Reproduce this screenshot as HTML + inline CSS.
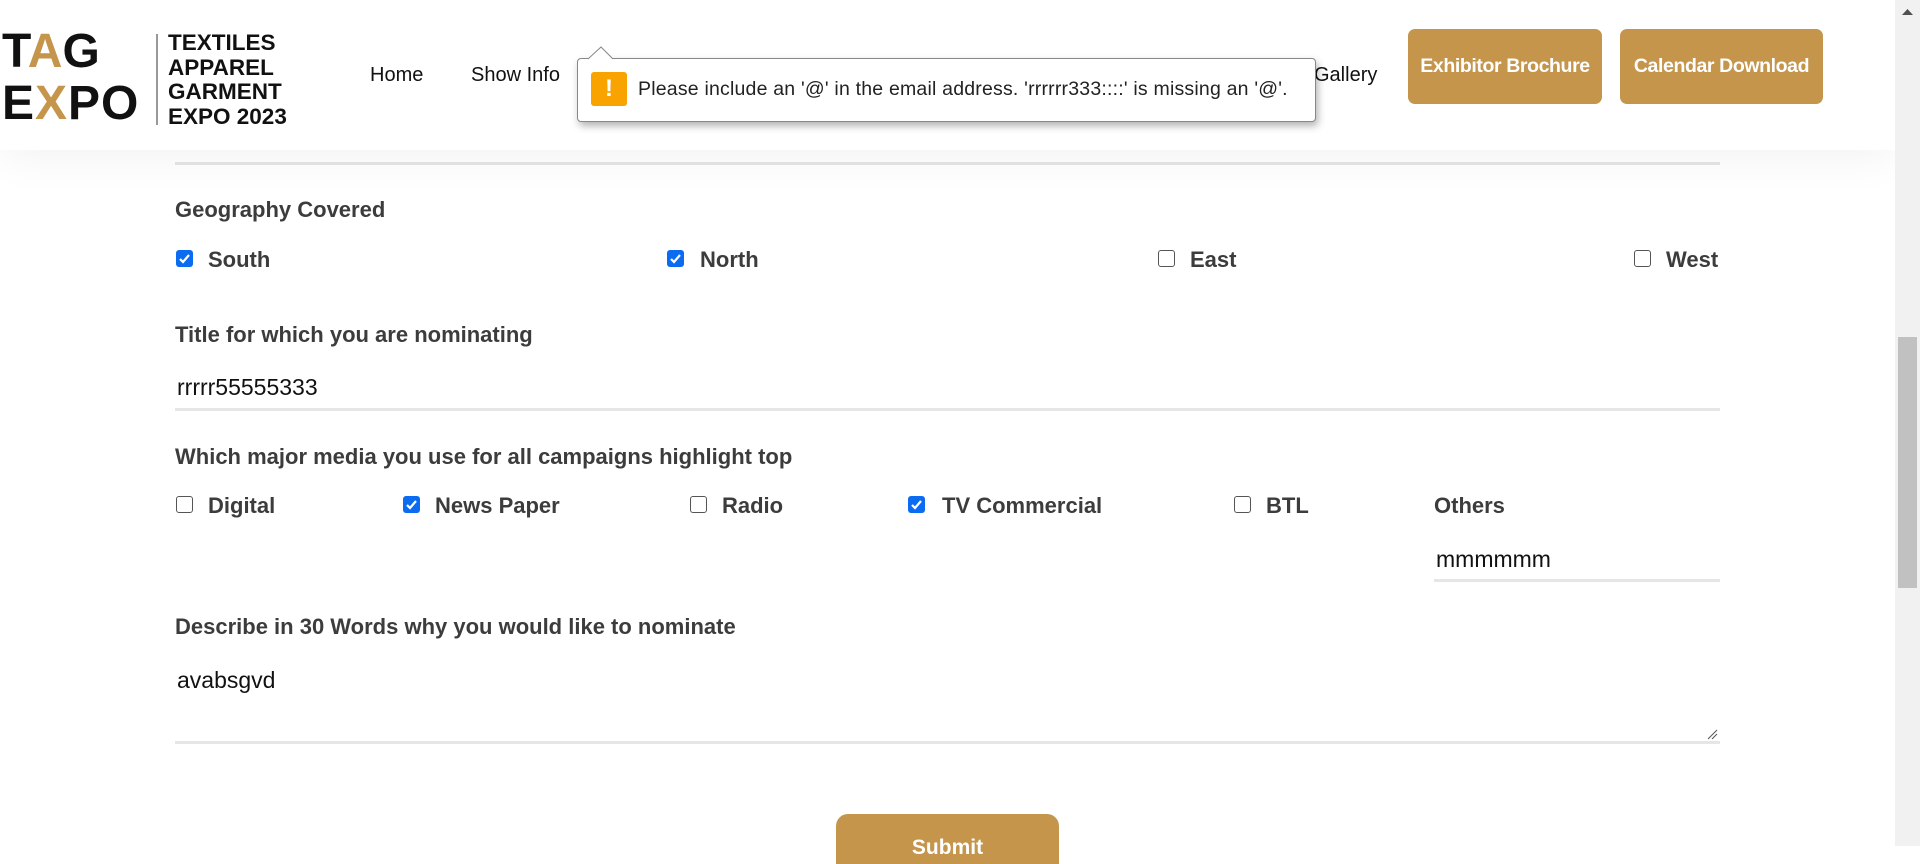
<!DOCTYPE html>
<html><head><meta charset="utf-8"><style>
*{margin:0;padding:0;box-sizing:border-box}
body{width:1920px;height:846px;overflow:hidden;background:#fff;font-family:"Liberation Sans",Arial,sans-serif;position:relative}
.abs{position:absolute}
.hdr{position:absolute;left:0;top:0;width:1895px;height:150px;background:#fff;box-shadow:0 8px 40px rgba(0,0,0,0.05);z-index:2}
.sb{position:absolute;left:1895px;top:0;width:25px;height:846px;background:#f1f1f1;z-index:3}
.thumb{position:absolute;left:3px;top:337px;width:19px;height:251px;background:#c1c1c1}
.nav{position:absolute;font-size:20px;color:#111;top:64px}
.btn{position:absolute;top:29px;height:75px;background:#c4954b;border-radius:7px;color:#fff;font-weight:bold;font-size:19.5px;display:flex;align-items:center;justify-content:center;letter-spacing:-0.4px}
.lbl{position:absolute;font-weight:bold;font-size:22px;color:#3c3c3c;left:175px}
.cb{position:absolute;width:17px;height:17px;border-radius:3px}
.cb.on{background:#0b6cf2}
.cb.off{border:1.5px solid #555;background:#fff}
.opt{position:absolute;font-weight:bold;font-size:22px;color:#3c3c3c}
.line{position:absolute;height:3px;background:#e6e6e6}
.val{position:absolute;font-size:23px;color:#111}
</style></head><body>
<div class="hdr">
 <div class="abs" style="left:2px;top:28px;font-size:48px;font-weight:bold;color:#111;letter-spacing:0px;line-height:48px">T<span style="color:#c4954b">A</span>G</div>
 <div class="abs" style="left:2px;top:80px;font-size:48px;font-weight:bold;color:#111;letter-spacing:1px;line-height:48px">E<span style="color:#c4954b">X</span>PO</div>
 <div class="abs" style="left:156px;top:34px;width:2px;height:91px;background:#999"></div>
 <div class="abs" style="left:168px;top:31px;font-size:22.5px;font-weight:bold;color:#111;line-height:24.5px">TEXTILES<br>APPAREL<br>GARMENT<br>EXPO 2023</div>
 <div class="nav" style="left:370px">Home</div>
 <div class="nav" style="left:471px">Show Info</div>
 <div class="nav" style="left:1314px">Gallery</div>
 <div class="btn" style="left:1408px;width:194px">Exhibitor Brochure</div>
 <div class="btn" style="left:1620px;width:203px">Calendar Download</div>
</div>
<div class="abs" style="left:577px;top:58px;width:739px;height:64px;background:#fff;border:1px solid #888;border-radius:4px;box-shadow:2px 4px 8px rgba(0,0,0,0.3);z-index:5">
 <div class="abs" style="left:13px;top:13px;width:36px;height:34px;background:#f9a300;border-radius:3px;color:#fff;font-weight:bold;font-size:24px;text-align:center;line-height:34px">!</div>
 <div class="abs" style="left:60px;top:19px;font-size:19.5px;color:#222;white-space:nowrap;letter-spacing:0.2px">Please include an '@' in the email address. 'rrrrrr333::::' is missing an '@'.</div>
</div>
<svg class="abs" style="left:588px;top:46px;z-index:6" width="26" height="14"><path d="M0 13 L13 1 L25 13" fill="#fff" stroke="#888" stroke-width="1"/></svg>

<div class="line" style="left:175px;top:162px;width:1545px"></div>
<div class="lbl" style="top:197px">Geography Covered</div>
<div class="cb on" style="left:176px;top:250px"><svg width="17" height="17"><path d="M4 9 L7 12 L13 5" stroke="#fff" stroke-width="2.2" fill="none"/></svg></div>
<div class="opt" style="left:208px;top:247px">South</div>
<div class="cb on" style="left:667px;top:250px"><svg width="17" height="17"><path d="M4 9 L7 12 L13 5" stroke="#fff" stroke-width="2.2" fill="none"/></svg></div>
<div class="opt" style="left:700px;top:247px">North</div>
<div class="cb off" style="left:1158px;top:250px"></div>
<div class="opt" style="left:1190px;top:247px">East</div>
<div class="cb off" style="left:1634px;top:250px"></div>
<div class="opt" style="left:1666px;top:247px">West</div>

<div class="lbl" style="top:322px">Title for which you are nominating</div>
<div class="val" style="left:177px;top:374px">rrrrr55555333</div>
<div class="line" style="left:175px;top:408px;width:1545px"></div>

<div class="lbl" style="top:444px">Which major media you use for all campaigns highlight top</div>
<div class="cb off" style="left:176px;top:496px"></div>
<div class="opt" style="left:208px;top:493px">Digital</div>
<div class="cb on" style="left:403px;top:496px"><svg width="17" height="17"><path d="M4 9 L7 12 L13 5" stroke="#fff" stroke-width="2.2" fill="none"/></svg></div>
<div class="opt" style="left:435px;top:493px">News Paper</div>
<div class="cb off" style="left:690px;top:496px"></div>
<div class="opt" style="left:722px;top:493px">Radio</div>
<div class="cb on" style="left:908px;top:496px"><svg width="17" height="17"><path d="M4 9 L7 12 L13 5" stroke="#fff" stroke-width="2.2" fill="none"/></svg></div>
<div class="opt" style="left:942px;top:493px">TV Commercial</div>
<div class="cb off" style="left:1234px;top:496px"></div>
<div class="opt" style="left:1266px;top:493px">BTL</div>
<div class="opt" style="left:1434px;top:493px">Others</div>
<div class="val" style="left:1436px;top:546px">mmmmmm</div>
<div class="line" style="left:1434px;top:579px;width:286px"></div>

<div class="lbl" style="top:614px">Describe in 30 Words why you would like to nominate</div>
<div class="val" style="left:177px;top:667px">avabsgvd</div>
<svg class="abs" style="left:1706px;top:728px" width="12" height="12"><path d="M2 11 L11 2 M6 11 L11 6" stroke="#555" stroke-width="1"/></svg>
<div class="line" style="left:175px;top:741px;width:1545px"></div>

<div class="abs" style="left:836px;top:814px;width:223px;height:50px;background:#c4954b;border-radius:12px 12px 0 0;color:#fff;font-weight:bold;font-size:21px;text-align:center;padding-top:22px">Submit</div>
<div class="sb"><div class="thumb"></div><svg class="abs" style="left:7px;top:8px" width="11" height="8"><path d="M0 7 L5.5 1 L11 7Z" fill="#505050"/></svg></div>
</body></html>
